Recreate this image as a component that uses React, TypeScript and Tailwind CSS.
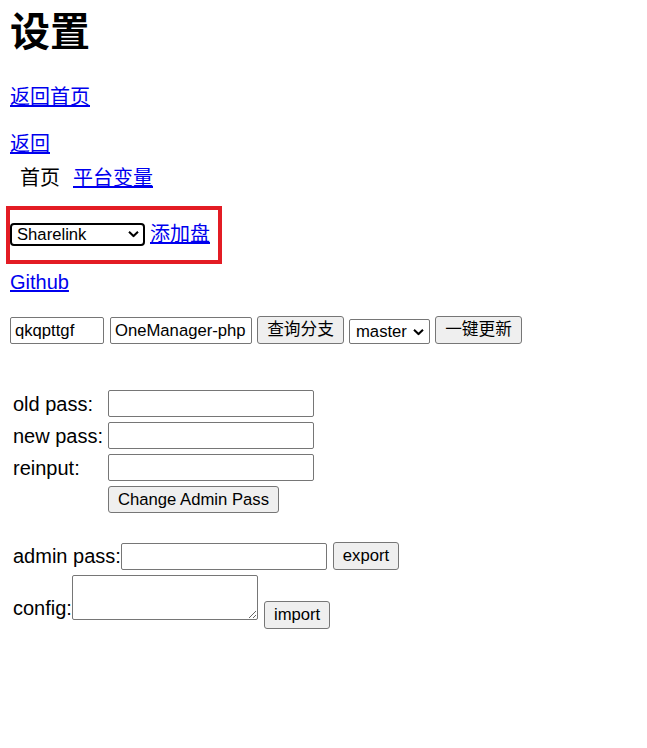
import React from "react"

const font = { fontFamily: '"Liberation Sans", "Noto Sans CJK SC", sans-serif' }

function Chevron() {
    return (
        <svg width="11" height="7" viewBox="0 0 11 7" fill="none" className="pointer-events-none absolute right-[6px] top-1/2 -translate-y-1/2">
            <path d="M1 1.2l4.5 4.3L10 1.2" stroke="#000" strokeWidth="2" />
        </svg>
    )
}

function Btn({ children, className = "" }: { children: React.ReactNode; className?: string }) {
    return (
        <button className={"h-[28px] rounded-[3px] border border-[#767676] bg-[#efefef] px-[9px] text-[16.67px] leading-[20px] text-black " + className}>
            {children}
        </button>
    )
}

function TextInput({ value = "", className = "" }: { value?: string; className?: string }) {
    return (
        <input
            defaultValue={value}
            className={"h-[27px] rounded-[2px] border border-[#767676] bg-white px-[4px] text-[16.67px] text-black outline-none " + className}
        />
    )
}

export default function App() {
    return (
        <div className="min-h-[748px] bg-white pl-[10px] text-[20px] text-black" style={font}>
            <h1 className="mt-[9px] h-[46px] text-[40px] font-bold leading-[46px]">设置</h1>

            <div className="mt-[30px] h-[24px] leading-[24px]">
                <a href="#" className="text-[#0000ee] underline">返回首页</a>
            </div>
            <div className="mt-[23px] h-[24px] leading-[24px]">
                <a href="#" className="text-[#0000ee] underline">返回</a>
            </div>
            <div className="mt-[10px] flex h-[24px] gap-[13px] pl-[10px] leading-[24px]">
                <span>首页</span>
                <a href="#" className="text-[#0000ee] underline">平台变量</a>
            </div>

            <div className="ml-[-4px] mt-[16px] flex h-[58px] w-[216px] items-center gap-[5px] border-[4px] border-[#e31c24] pb-[2px]">
                <div className="relative flex">
                    <select className="block h-[23px] w-[135px] appearance-none rounded-[4px] border-2 border-black bg-white pl-[5px] text-[16.67px] leading-[19px] text-black outline-none">
                        <option>Sharelink</option>
                    </select>
                    <Chevron />
                </div>
                <a href="#" className="leading-[24px] text-[#0000ee] underline">添加盘</a>
            </div>

            <div className="mt-[6px] h-[24px] leading-[24px]">
                <a href="#" className="text-[#0000ee] underline">Github</a>
            </div>

            <div className="mt-[20px] flex h-[30px] items-end gap-[5px]">
                <TextInput value="qkqpttgf" className="w-[94px]" />
                <TextInput value="OneManager-php" className="ml-[1px] w-[142px]" />
                <Btn className="w-[87px]">查询分支</Btn>
                <div className="relative flex">
                    <select className="block h-[25px] w-[81px] appearance-none rounded-[2px] border border-[#767676] bg-white pl-[6px] text-[16.67px] leading-[20px] text-black outline-none">
                        <option>master</option>
                    </select>
                    <Chevron />
                </div>
                <Btn className="w-[87px]">一键更新</Btn>
            </div>

            <div className="ml-[3px] mt-[46px] grid grid-cols-[95px_auto] items-center gap-y-[5px]">
                <span className="leading-[24px]">old pass:</span>
                <TextInput className="w-[206px]" />
                <span className="leading-[24px]">new pass:</span>
                <TextInput className="w-[206px]" />
                <span className="leading-[24px]">reinput:</span>
                <TextInput className="w-[206px]" />
                <span />
                <Btn className="w-[171px] !h-[27px]">Change Admin Pass</Btn>
            </div>

            <div className="ml-[3px] mt-[29px] flex h-[28px] items-center">
                <span className="leading-[24px]">admin pass:</span>
                <TextInput className="w-[206px]" />
                <Btn className="ml-[6px] w-[66px]">export</Btn>
            </div>

            <div className="ml-[3px] mt-[5px] flex items-end">
                <span className="leading-[24px]">config:</span>
                <textarea className="h-[45px] w-[186px] rounded-[2px] border border-[#767676] bg-white text-[16.67px] outline-none" />
                <Btn className="ml-[6px] mb-[-9px] h-[27px] w-[66px]">import</Btn>
            </div>
        </div>
    )
}
